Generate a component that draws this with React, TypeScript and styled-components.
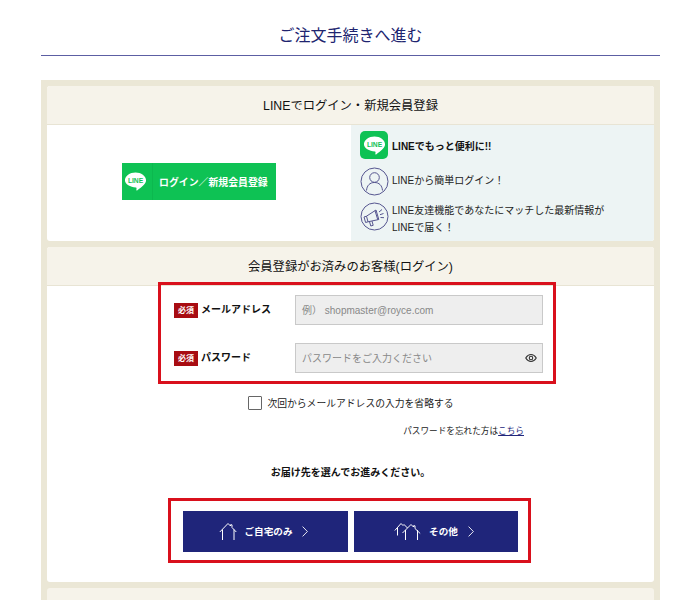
import styled, { createGlobalStyle } from "styled-components";

const GlobalStyle = createGlobalStyle`
  html, body {
    margin: 0;
    padding: 0;
    height: 600px;
    overflow: hidden;
    background: #fff;
  }
  * {
    box-sizing: border-box;
  }
  body {
    font-family: "Liberation Sans", "Noto Sans CJK JP", sans-serif;
    color: #111;
  }
`;

function LineBubble({ size, fill, text }: { size: number; fill: string; text: string }) {
  return (
    <svg width={size} height={size} viewBox="0 0 24 24">
      <path
        fill={fill}
        d="M12 2.500c5.800 0 11 3.500 11 8.200 0 4-4.900 7.400-9 10.300-.8.600-1.300.3-1.100-.5l.2-1.500c0-.4-.2-.6-.6-.7C6.500 17.900 1 14.700 1 10.700 1 6 6.200 2.500 12 2.500z"
      />
      <text
        x="12"
        y="13.200"
        textAnchor="middle"
        fontSize="7"
        fontWeight="700"
        fontFamily="Liberation Sans, sans-serif"
        fill={text}
      >
        LINE
      </text>
    </svg>
  );
}

function UserIcon() {
  return (
    <svg width="29" height="29" viewBox="0 0 29 29" fill="none" stroke="#55558f" strokeWidth="1">
      <circle cx="14.500" cy="14.500" r="13.500" />
      <circle cx="14.500" cy="10.500" r="4.800" />
      <path d="M6.500 23.500c.4-5 3.300-8 8-8s7.600 3 8 8" />
    </svg>
  );
}

function MegaphoneIcon() {
  return (
    <svg width="29" height="29" viewBox="0 0 29 29" fill="none" stroke="#55558f" strokeWidth="1">
      <circle cx="14.500" cy="14.500" r="13.500" />
      <path d="M4 15l1.600 5.500 2.400-.7-1.500-5.600z" />
      <path d="M6.500 14.200l9.500-6.200 2.800 9.500-10.800 2.300" />
      <path d="M15 8.600l2.800 9.200" />
      <path d="M9.500 19.700l1.300 4.300 2.400-.7-1.200-4.200" />
      <path d="M19 10l3-2.500M20 12.700l3.500-1.200M20.500 15.500l3.500.2" />
    </svg>
  );
}

function EyeIcon() {
  return (
    <svg width="12" height="12" viewBox="0 0 24 24" fill="none" stroke="#333" strokeWidth="2.200">
      <path d="M1.500 12C4.500 7 8 5 12 5s7.500 2 10.500 7c-3 5-6.500 7-10.500 7S4.500 17 1.500 12z" />
      <circle cx="12" cy="12" r="3.500" />
    </svg>
  );
}

function HouseIcon() {
  return (
    <svg width="18" height="19" viewBox="0 0 18 19" fill="none" stroke="#fff" strokeWidth="1">
      <path d="M.8 10L9 1.500l2.500 2.500V2.800h1.500v2.700l4.300 4.500" />
      <path d="M3.500 7.500V18M15 7.500V18" />
    </svg>
  );
}

function HousesIcon() {
  return (
    <svg width="27" height="19" viewBox="0 0 27 19" fill="none" stroke="#fff" strokeWidth="1">
      <path d="M.8 8.500L7 1.500l2 2 1-1 3.500 3.500" />
      <path d="M3.500 6V13.500" />
      <path d="M8.500 11L17 2.500l2.500 2.500V3.800H21v2.700l5.200 5" />
      <path d="M11.500 8V18M23.500 8V18" />
    </svg>
  );
}

function Chevron() {
  return (
    <svg width="6" height="11" viewBox="0 0 6 11" fill="none" stroke="#fff" strokeWidth="0.900">
      <path d="M.6.600L5.400 5.500.6 10.400" />
    </svg>
  );
}

export default function App() {
  return (
    <Page>
      <GlobalStyle />
      <Title>ご注文手続きへ進む</Title>
      <Panel>
        <Card>
          <CardHeader>LINEでログイン・新規会員登録</CardHeader>
          <LineBody>
            <LineLeft>
              <LineButton>
                <LineMark>
                  <LineBubble size={23} fill="#fff" text="#0ec254" />
                </LineMark>
                <LineButtonText>ログイン／新規会員登録</LineButtonText>
              </LineButton>
            </LineLeft>
            <LineRight>
              <LeadRow>
                <LineTile>
                  <LineBubble size={23} fill="#fff" text="#0ec254" />
                </LineTile>
                <InfoTitle>LINEでもっと便利に!!</InfoTitle>
              </LeadRow>
              <InfoRow>
                <UserIcon />
                <InfoText>LINEから簡単ログイン！</InfoText>
              </InfoRow>
              <TallRow>
                <MegaphoneIcon />
                <InfoText>
                  LINE友達機能であなたにマッチした最新情報が
                  <br />
                  LINEで届く！
                </InfoText>
              </TallRow>
            </LineRight>
          </LineBody>
        </Card>

        <Card>
          <CardHeader>会員登録がお済みのお客様(ログイン)</CardHeader>
          <LoginBody>
            <FormBox>
              <FieldRow>
                <FieldLabel>
                  <Required>必須</Required>
                  <LabelText>メールアドレス</LabelText>
                </FieldLabel>
                <InputBox>
                  <Placeholder>例） shopmaster@royce.com</Placeholder>
                </InputBox>
              </FieldRow>
              <FieldRow>
                <FieldLabel>
                  <Required>必須</Required>
                  <LabelText>パスワード</LabelText>
                </FieldLabel>
                <InputBox>
                  <Placeholder>パスワードをご入力ください</Placeholder>
                  <EyeIcon />
                </InputBox>
              </FieldRow>
            </FormBox>
            <RememberRow>
              <CheckBox />
              <span>次回からメールアドレスの入力を省略する</span>
            </RememberRow>
            <ForgotRow>
              パスワードを忘れた方は<ForgotLink href="#">こちら</ForgotLink>
            </ForgotRow>
            <Notice>お届け先を選んでお進みください。</Notice>
            <ChoiceBox>
              <ChoiceButton>
                <HouseIcon />
                <ChoiceLabel>ご自宅のみ</ChoiceLabel>
                <Chevron />
              </ChoiceButton>
              <ChoiceButton>
                <HousesIcon />
                <ChoiceLabel>その他</ChoiceLabel>
                <Chevron />
              </ChoiceButton>
            </ChoiceBox>
          </LoginBody>
        </Card>

        <NextCard />
      </Panel>
    </Page>
  );
}

// ====== Styled ======
const Page = styled.div`
  width: 700px;
  height: 600px;
  padding: 0 40px 0 41px;
  overflow: hidden;
`;

const Title = styled.h1`
  margin: 0 0 24.500px;
  height: 55.500px;
  padding-top: 25px;
  border-bottom: 1px solid #5c5ea3;
  font-size: 16px;
  line-height: 21px;
  font-weight: 400;
  text-align: center;
  color: #20246f;
`;

const Panel = styled.div`
  display: flex;
  flex-direction: column;
  gap: 6px;
  padding: 6px;
  background: #ebe7d6;
`;

const Card = styled.section`
  background: #fff;
  border-radius: 3px;
  overflow: hidden;
`;

const NextCard = styled.div`
  height: 40px;
  background: #f6f3ea;
  border-radius: 3px;
`;

const CardHeader = styled.h2`
  margin: 0;
  height: 39px;
  background: #f6f3ea;
  border-bottom: 1px solid #e8e4d4;
  font-size: 12.300px;
  line-height: 40px;
  font-weight: 400;
  text-align: center;
  color: #111;
`;

const LineBody = styled.div`
  display: grid;
  grid-template-columns: 304px 303px;
  height: 116px;
`;

const LineLeft = styled.div`
  display: flex;
  align-items: center;
  justify-content: center;
`;

const LineButton = styled.a`
  display: flex;
  align-items: center;
  width: 154px;
  height: 37px;
  margin-top: -3px;
  background: #0ec254;
`;

const LineMark = styled.span`
  display: flex;
  align-items: center;
  justify-content: center;
  width: 31px;
  height: 37px;
  padding-right: 4px;
  margin-right: 6px;
  border-right: 1px solid #0cb84f;
`;

const LineButtonText = styled.span`
  font-size: 9.900px;
  font-weight: 700;
  color: #fff;
  white-space: nowrap;
`;

const LineRight = styled.div`
  display: flex;
  flex-direction: column;
  gap: 6px;
  padding: 6px 0 0 9px;
  background: #edf4f4;
`;

const InfoRow = styled.div`
  display: flex;
  align-items: center;
  gap: 3px;
`;

const LeadRow = styled(InfoRow)`
  margin-bottom: 2px;
`;

const TallRow = styled(InfoRow)`
  align-items: flex-start;
  span {
    margin-top: 1px;
  }
`;

const LineTile = styled.span`
  display: flex;
  align-items: center;
  justify-content: center;
  width: 28px;
  height: 28px;
  margin-right: 1px;
  background: #0ec254;
  border-radius: 5px;
`;

const InfoTitle = styled.span`
  font-size: 10px;
  font-weight: 700;
`;

const InfoText = styled.span`
  font-size: 10px;
  line-height: 16.500px;
  color: #222;
`;

const LoginBody = styled.div`
  height: 296px;
  display: flex;
  flex-direction: column;
  align-items: center;
`;

const FormBox = styled.div`
  display: flex;
  flex-direction: column;
  gap: 18px;
  width: 398px;
  height: 102px;
  padding: 10px 10px 0 13px;
  border: 3px solid #d9101c;
  margin-left: 13px;
  margin-top: -4px;
`;

const FieldRow = styled.div`
  display: flex;
  align-items: center;
  justify-content: space-between;
`;

const FieldLabel = styled.div`
  display: flex;
  align-items: center;
  gap: 3px;
`;

const Required = styled.span`
  width: 24px;
  height: 15px;
  background: #a80c12;
  color: #fff;
  font-size: 8px;
  line-height: 15px;
  text-align: center;
  font-weight: 700;
`;

const LabelText = styled.span`
  margin-bottom: 4px;
  font-size: 10px;
  font-weight: 700;
`;

const InputBox = styled.div`
  display: flex;
  align-items: center;
  justify-content: space-between;
  width: 248px;
  height: 30px;
  padding: 0 5px 1px 6px;
  background: #eeeeee;
  border: 1px solid #c9c9c9;
`;

const Placeholder = styled.span`
  font-size: 10px;
  color: #888;
`;

const RememberRow = styled.label`
  display: flex;
  align-items: center;
  gap: 5px;
  margin-top: 12px;
  margin-left: 1px;
  font-size: 9.800px;
  color: #222;
`;

const CheckBox = styled.span`
  width: 14px;
  height: 14px;
  background: #fff;
  border: 1px solid #666;
  border-radius: 1px;
`;

const ForgotRow = styled.div`
  align-self: flex-end;
  margin: 15px 130px 0 0;
  font-size: 8.650px;
  line-height: 12px;
  color: #222;
`;

const ForgotLink = styled.a`
  color: #23277c;
  text-decoration: underline;
`;

const Notice = styled.p`
  margin: 29px 0 0;
  font-size: 10px;
  line-height: 14px;
  font-weight: 700;
  color: #111;
`;

const ChoiceBox = styled.div`
  display: grid;
  grid-template-columns: 165px 164px;
  gap: 6px;
  width: 363px;
  height: 65px;
  margin: 18px 0 0 -2px;
  padding: 9.500px 12px 0 12px;
  border: 3px solid #d9101c;
`;

const ChoiceButton = styled.a`
  display: flex;
  align-items: center;
  justify-content: center;
  gap: 8px;
  height: 41px;
  padding-right: 4px;
  background: #1f257a;
  color: #fff;
`;

const ChoiceLabel = styled.span`
  margin-right: 2px;
  font-size: 9.600px;
  font-weight: 700;
`;
